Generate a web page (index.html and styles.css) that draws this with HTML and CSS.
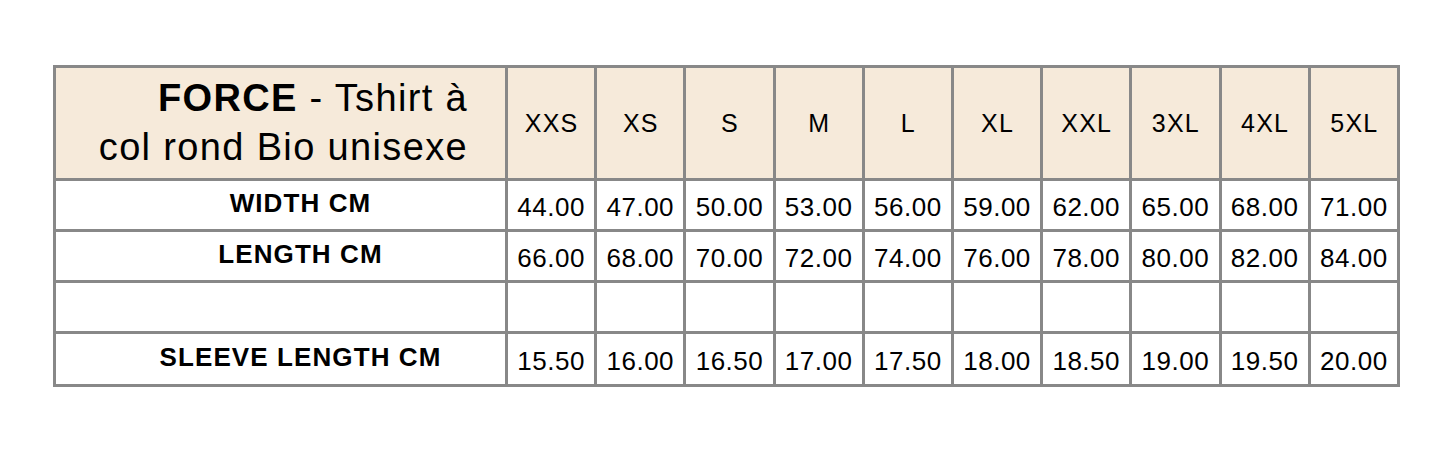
FILE: index.html
```html
<!DOCTYPE html>
<html lang="fr">
<head>
<meta charset="utf-8">
<title>FORCE - Tshirt à col rond Bio unisexe</title>
<link rel="stylesheet" href="styles.css">
</head>
<body>
<table class="size-table">
  <colgroup>
    <col class="col-label">
    <col span="10" class="col-size">
  </colgroup>
  <thead>
    <tr class="row-head">
      <th class="title"><strong>FORCE</strong> - Tshirt à<br>col rond Bio unisexe</th>
      <th>XXS</th><th>XS</th><th>S</th><th>M</th><th>L</th><th>XL</th><th>XXL</th><th>3XL</th><th>4XL</th><th>5XL</th>
    </tr>
  </thead>
  <tbody>
    <tr>
      <td class="label">WIDTH CM</td>
      <td>44.00</td><td>47.00</td><td>50.00</td><td>53.00</td><td>56.00</td><td>59.00</td><td>62.00</td><td>65.00</td><td>68.00</td><td>71.00</td>
    </tr>
    <tr>
      <td class="label">LENGTH CM</td>
      <td>66.00</td><td>68.00</td><td>70.00</td><td>72.00</td><td>74.00</td><td>76.00</td><td>78.00</td><td>80.00</td><td>82.00</td><td>84.00</td>
    </tr>
    <tr>
      <td class="label"></td>
      <td></td><td></td><td></td><td></td><td></td><td></td><td></td><td></td><td></td><td></td>
    </tr>
    <tr class="row-last">
      <td class="label">SLEEVE LENGTH CM</td>
      <td>15.50</td><td>16.00</td><td>16.50</td><td>17.00</td><td>17.50</td><td>18.00</td><td>18.50</td><td>19.00</td><td>19.50</td><td>20.00</td>
    </tr>
  </tbody>
</table>
</body>
</html>
```

FILE: styles.css
```css
html, body {
  margin: 0;
  padding: 0;
  background: #ffffff;
}

body {
  font-family: "Liberation Sans", Arial, sans-serif;
  color: #000000;
}

.size-table {
  border-collapse: collapse;
  table-layout: fixed;
  width: 1347px;
  margin: 65px 0 0 53px;
}

.col-label {
  width: 452px;
}

.size-table th,
.size-table td {
  border: 3px solid #888888;
  padding: 0;
  text-align: center;
  vertical-align: middle;
}

.row-head th {
  height: 110px;
  background: #f6eada;
  font-weight: normal;
  font-size: 25px;
  letter-spacing: 1.2px;
  padding-left: 1px;
}

.row-head th.title {
  text-align: right;
  font-size: 38px;
  line-height: 49px;
  letter-spacing: 1.35px;
  padding: 0 37px 0 0;
}

.row-head th.title strong {
  font-weight: bold;
  letter-spacing: 1.3px;
}

.size-table tbody td {
  height: 43px;
  font-size: 26px;
  letter-spacing: 0.5px;
  padding-top: 5px;
}

.size-table tbody .row-last td {
  height: 45px;
}

.size-table tbody td.label {
  font-weight: bold;
  font-size: 26px;
  letter-spacing: 1.1px;
  padding: 0 0 4px 40px;
}
```
